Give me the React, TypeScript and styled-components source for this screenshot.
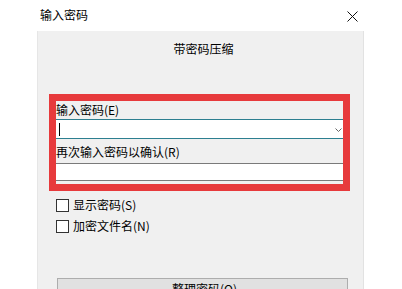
import React from "react";
import styled, { createGlobalStyle } from "styled-components";

const GlobalStyle = createGlobalStyle`
  html, body {
    margin: 0;
    padding: 0;
    background: #ffffff;
    overflow: hidden;
  }
  body {
    font-family: "Noto Sans CJK SC", "Liberation Sans", sans-serif;
    font-size: 12px;
    color: #000000;
  }
`;

const Window = styled.div`
  width: 402px;
  height: 289px;
  display: flex;
  flex-direction: column;
  overflow: hidden;
`;

const TitleBar = styled.div`
  flex-shrink: 0;
  height: 31px;
  display: flex;
  align-items: center;
  justify-content: space-between;
  padding: 0 44px 0 40px;
  box-sizing: border-box;
`;

const Title = styled.span`
  font-size: 12px;
  line-height: 14px;
  margin-top: -2px;
`;

const CloseIcon = styled.svg`
  width: 11px;
  height: 11px;
  margin-top: 1px;
`;

const Panel = styled.div`
  margin-left: 37px;
  width: 327px;
  flex: 1 0 auto;
  background: #f0f0f0;
  border-left: 1px solid #e6e6e6;
  border-right: 1px solid #e2e2e2;
  box-sizing: border-box;
  display: flex;
  flex-direction: column;

  & > * {
    flex-shrink: 0;
  }
`;

const Heading = styled.div`
  text-align: center;
  font-size: 12px;
  line-height: 14px;
  padding-top: 11px;
  padding-left: 6px;
`;

const Highlight = styled.div`
  margin: 38px 0 0 11px;
  width: 301px;
  border: 7px solid #e73a3c;
  box-sizing: border-box;
  display: flex;
  flex-direction: column;
  padding-bottom: 3px;

  & > * {
    flex-shrink: 0;
  }
`;

const Label = styled.div<{ $gap: number }>`
  height: 16px;
  line-height: 16px;
  margin-top: ${(p) => p.$gap}px;
  white-space: nowrap;
`;

const Field = styled.div<{ $focused?: boolean; $height: number; $gap: number }>`
  height: ${(p) => p.$height}px;
  margin-top: ${(p) => p.$gap}px;
  background: #ffffff;
  border-top: 1px solid ${(p) => (p.$focused ? "#2d7f90" : "#7a7a7a")};
  border-bottom: 1px solid ${(p) => (p.$focused ? "#2d7f90" : "#7a7a7a")};
  box-sizing: border-box;
  display: flex;
  align-items: center;
  justify-content: space-between;
  padding: 0 1px 0 3px;
`;

const Caret = styled.span`
  width: 1px;
  height: 13px;
  background: #000000;
`;

const Chevron = styled.svg`
  width: 7px;
  height: 5px;
  margin-top: 2px;
`;

const Options = styled.div`
  display: flex;
  flex-direction: column;
  gap: 7px;
  padding: 7px 0 0 18px;
`;

const Option = styled.label`
  display: flex;
  align-items: center;
  gap: 4px;
  line-height: 14px;
`;

const Box = styled.span`
  width: 13px;
  height: 13px;
  border: 1px solid #333333;
  background: #ffffff;
  box-sizing: border-box;
`;

const Button = styled.div`
  margin: 45px 0 0 19px;
  width: 291px;
  height: 23px;
  background: #e1e1e1;
  border: 1px solid #adadad;
  box-sizing: border-box;
  text-align: center;
  line-height: 19px;
  padding-left: 4px;
`;

const App = () => {
  return (
    <Window>
      <GlobalStyle />
      <TitleBar>
        <Title>输入密码</Title>
        <CloseIcon viewBox="0 0 11 11">
          <path d="M0.5 0.5L10.5 10.5M10.5 0.5L0.5 10.5" stroke="#111" strokeWidth="1" fill="none" />
        </CloseIcon>
      </TitleBar>
      <Panel>
        <Heading>带密码压缩</Heading>
        <Highlight>
          <Label $gap={1}>输入密码(E)</Label>
          <Field $focused $height={20} $gap={1}>
            <Caret />
            <Chevron viewBox="0 0 7 5">
              <path d="M0.5 0.5L3.5 3.5L6.5 0.5" stroke="#666" strokeWidth="1" fill="none" />
            </Chevron>
          </Field>
          <Label $gap={5}>再次输入密码以确认(R)</Label>
          <Field $height={18} $gap={3} />
        </Highlight>
        <Options>
          <Option>
            <Box />
            显示密码(S)
          </Option>
          <Option>
            <Box />
            加密文件名(N)
          </Option>
        </Options>
        <Button>整理密码(O)</Button>
      </Panel>
    </Window>
  );
};

export default App;
